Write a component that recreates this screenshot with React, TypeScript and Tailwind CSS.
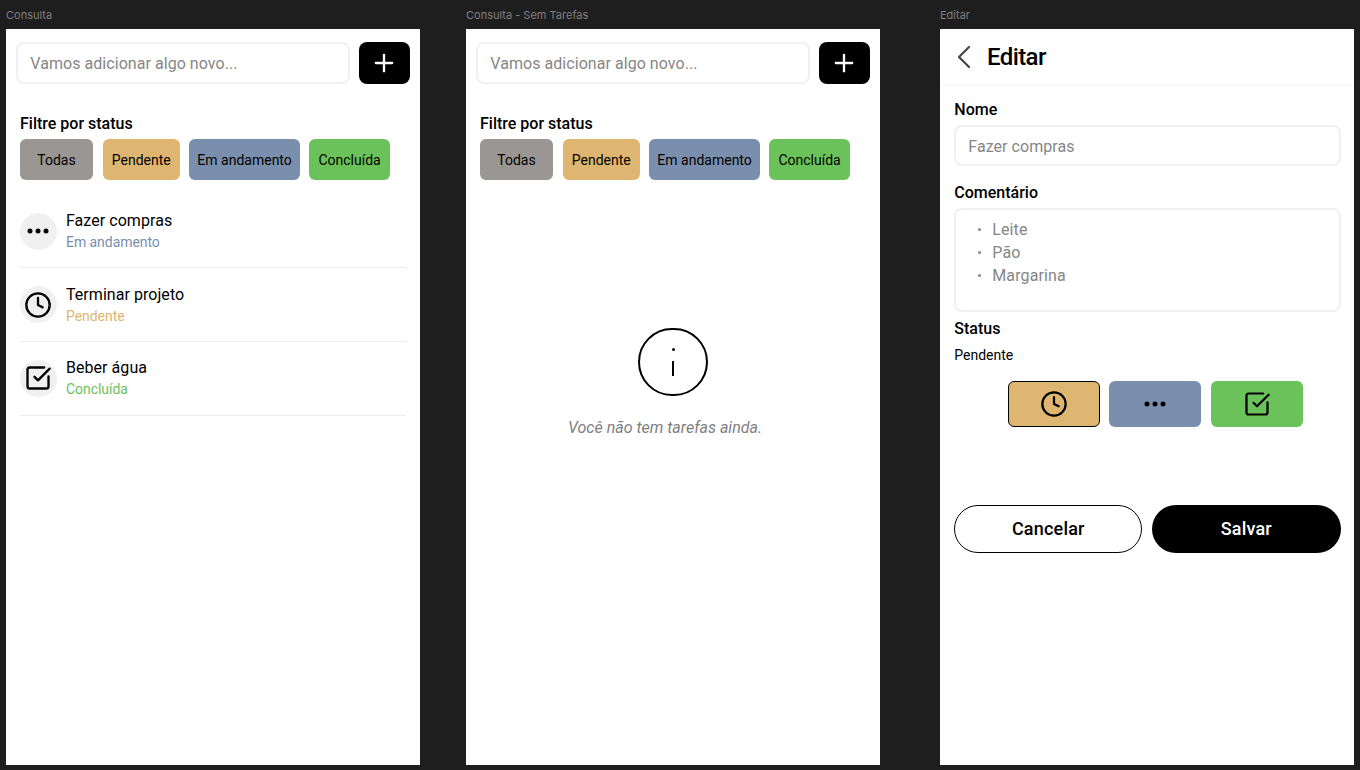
import React from 'react';
import { ChevronLeft, Clock, Plus, SquareCheckBig } from 'lucide-react';

const filters = [
  { label: 'Todas', className: 'w-[73.8px] bg-[#9a9693]' },
  { label: 'Pendente', className: 'ml-[0.3px] w-[77.1px] bg-[#deb671]' },
  { label: 'Em andamento', className: 'w-[111.6px] bg-[#7a8fad]' },
  { label: 'Concluída', className: 'w-[80.4px] bg-[#6bc25b]' },
];

const Dots = () => (
  <svg width="22" height="6" viewBox="0 0 22 6" fill="black">
    <circle cx="3" cy="3" r="2.5" />
    <circle cx="11" cy="3" r="2.5" />
    <circle cx="19" cy="3" r="2.5" />
  </svg>
);

// Search row and filter chips are shared by both list screens
const TopSection = () => (
  <>
    <div className="flex gap-[9px] pl-[10.3px] pr-[10px] pt-[13px]">
      <input
        readOnly
        placeholder="Vamos adicionar algo novo..."
        className="h-[41.7px] w-[333.7px] rounded-[8px] border-2 border-[#f0f0f0] bg-white px-3 pt-[2px] text-[16px] tracking-[0.05px] outline-none placeholder:text-[#868686]"
      />
      <button className="flex h-[41.7px] w-[51px] items-center justify-center rounded-[8px] bg-black text-white">
        <Plus size={28} strokeWidth={2} />
      </button>
    </div>
    <h2 className="mt-[30.3px] pl-[14px] text-[16px] font-medium leading-[19px] text-black">Filtre por status</h2>
    <div className="mt-[6px] flex gap-[9px] pl-[13.6px]">
      {filters.map((f) => (
        <div key={f.label} className={`flex h-[41.3px] items-center justify-center rounded-[6px] pt-[1px] text-[14px] text-black ${f.className}`}>
          {f.label}
        </div>
      ))}
    </div>
  </>
);

const tasks = [
  { title: 'Fazer compras', status: 'Em andamento', color: 'text-[#7a8fad]', icon: <Dots /> },
  { title: 'Terminar projeto', status: 'Pendente', color: 'text-[#deb671]', icon: <Clock size={28} strokeWidth={2} color="black" /> },
  { title: 'Beber água', status: 'Concluída', color: 'text-[#6bc25b]', icon: <SquareCheckBig size={28} strokeWidth={2} color="black" /> },
];

const Frame = ({ label, children, className }: { label: string; children: React.ReactNode; className: string }) => (
  <div className={`flex w-[414px] shrink-0 flex-col ${className}`}>
    <div className="h-[29px] pt-[9px] font-['Inter',sans-serif] text-[11px] leading-[12px] text-[#7f7f7f]">{label}</div>
    <div className="h-[736px] w-[414px] bg-white font-['Roboto',sans-serif]">{children}</div>
  </div>
);

const ConsultaScreen = () => (
  <>
    <TopSection />
    <div className="mt-[14.4px] pl-[13.6px] pr-[14px]">
      {tasks.map((t) => (
        <div key={t.title} className="flex h-[73.7px] items-center gap-[9.4px] border-b-[1.5px] border-[#ededed]">
          <div className="flex h-[37px] w-[37px] items-center justify-center rounded-full bg-[#f0f0f0]">{t.icon}</div>
          <div className="flex flex-col">
            <span className="text-[16px] leading-[22px] tracking-[0.05px] text-black">{t.title}</span>
            <span className={`text-[14px] leading-[20px] tracking-[-0.05px] ${t.color}`}>{t.status}</span>
          </div>
        </div>
      ))}
    </div>
  </>
);

const EmptyScreen = () => (
  <>
    <TopSection />
    <div className="mt-[148px] flex flex-col items-center">
      <div className="flex h-[67.5px] w-[69.5px] flex-col items-center rounded-full border-[2.3px] border-black pt-[17.5px]">
        <div className="h-[3px] w-[3px] rounded-full bg-black" />
        <div className="mt-[10px] h-[15px] w-[2px] bg-black" />
      </div>
      <p className="mr-[16px] mt-[22.5px] text-[16px] italic leading-[20px] text-[#808080]">Você não tem tarefas ainda.</p>
    </div>
  </>
);

const EditScreen = () => (
  <>
    <header className="flex h-[55px] items-center bg-white pl-[3.5px] shadow-[0_1px_4px_rgba(0,0,0,0.06)]">
      <ChevronLeft size={40} strokeWidth={1.3} className="text-[#444444]" />
      <h1 className="ml-[3.5px] text-[24px] font-medium leading-[28px] tracking-[-0.6px] text-black">Editar</h1>
    </header>
    <div className="pl-[14.3px] pr-[13.4px]">
      <label className="mt-[16px] block text-[16px] font-medium leading-[19px] text-black">Nome</label>
      <input
        readOnly
        placeholder="Fazer compras"
        className="mt-[6.3px] h-[41px] w-full rounded-[8px] border-2 border-[#f0f0f0] px-3 pt-[2px] text-[16px] tracking-[0.05px] outline-none placeholder:text-[#868686]"
      />
      <label className="mt-[17px] block text-[16px] font-medium leading-[19px] text-black">Comentário</label>
      <ul className="mt-[6px] h-[104px] rounded-[8px] border-2 border-[#f0f0f0] pl-[36px] pt-[8px] text-[16px] leading-[23px] tracking-[0.1px] text-[#868686]">
        <li className="relative before:absolute before:left-[-14px] before:top-[10px] before:h-[3px] before:w-[3px] before:rounded-full before:bg-[#868686]">Leite</li>
        <li className="relative before:absolute before:left-[-14px] before:top-[10px] before:h-[3px] before:w-[3px] before:rounded-full before:bg-[#868686]">Pão</li>
        <li className="relative before:absolute before:left-[-14px] before:top-[10px] before:h-[3px] before:w-[3px] before:rounded-full before:bg-[#868686]">Margarina</li>
      </ul>
      <label className="mt-[7px] block text-[16px] font-medium leading-[19px] text-black">Status</label>
      <p className="mt-[9px] text-[14px] leading-[17px] text-black">Pendente</p>
      <div className="mt-[17px] flex gap-[9.4px] pl-[54px]">
        <button className="flex h-[46px] w-[91.4px] items-center justify-center rounded-[6px] border border-black bg-[#deb671]">
          <Clock size={28} strokeWidth={1.9} color="black" />
        </button>
        <button className="flex h-[46px] w-[92.4px] items-center justify-center rounded-[6px] bg-[#7a8fad]">
          <Dots />
        </button>
        <button className="flex h-[46px] w-[92px] items-center justify-center rounded-[6px] bg-[#6bc25b]">
          <SquareCheckBig size={28} strokeWidth={1.9} color="black" />
        </button>
      </div>
      <div className="mt-[78px] flex gap-[9.7px]">
        <button className="h-[48px] w-[188px] rounded-[24px] border border-black bg-white pb-[2px] text-[18px] font-medium tracking-[0.2px] text-black">Cancelar</button>
        <button className="h-[48px] w-[188.6px] rounded-[24px] bg-black pb-[2px] text-[18px] font-medium tracking-[0.2px] text-white">Salvar</button>
      </div>
    </div>
  </>
);

export default function App() {
  return (
    <div className="flex h-[770px] w-[1360px] overflow-hidden bg-[#1e1e1e] pl-[6px]">
      <Frame label="Consulta" className="">
        <ConsultaScreen />
      </Frame>
      <Frame label="Consulta - Sem Tarefas" className="ml-[46px]">
        <EmptyScreen />
      </Frame>
      <Frame label="Editar" className="ml-[60px]">
        <EditScreen />
      </Frame>
    </div>
  );
}
